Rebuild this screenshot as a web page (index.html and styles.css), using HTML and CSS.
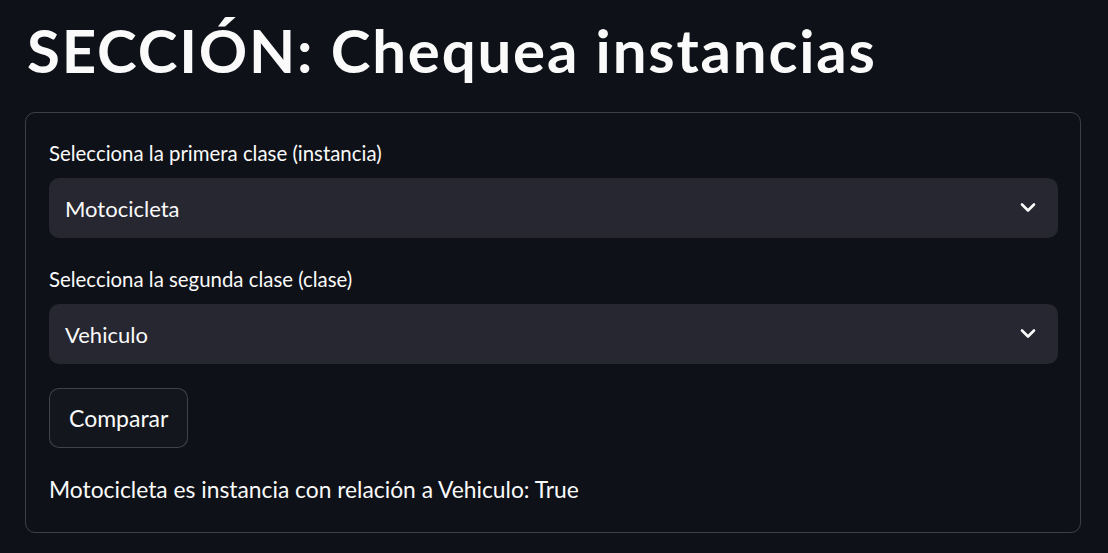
FILE: index.html
```html
<!DOCTYPE html>
<html lang="es">
<head>
<meta charset="utf-8">
<title>SECCIÓN: Chequea instancias</title>
<link rel="stylesheet" href="styles.css">
</head>
<body>
<main class="page">
  <h1 class="title">SECCIÓN: Chequea instancias</h1>
  <section class="form">
    <div class="field">
      <label class="label">Selecciona la primera clase (instancia)</label>
      <div class="select">
        <span class="value">Motocicleta</span>
        <svg class="chev" width="16" height="16" viewBox="0 0 16 16"><path d="M2 4.5 L8 10.5 L14 4.5" fill="none" stroke="#fafafa" stroke-width="2.6" stroke-linecap="round" stroke-linejoin="round"/></svg>
      </div>
    </div>
    <div class="field">
      <label class="label">Selecciona la segunda clase (clase)</label>
      <div class="select">
        <span class="value">Vehiculo</span>
        <svg class="chev" width="16" height="16" viewBox="0 0 16 16"><path d="M2 4.5 L8 10.5 L14 4.5" fill="none" stroke="#fafafa" stroke-width="2.6" stroke-linecap="round" stroke-linejoin="round"/></svg>
      </div>
    </div>
    <button class="btn">Comparar</button>
    <p class="result">Motocicleta es instancia con relación a Vehiculo: True</p>
  </section>
</main>
</body>
</html>
```
FILE: styles.css
```css
html, body {
  margin: 0;
  padding: 0;
  background: #0e1117;
  color: #fafafa;
  font-family: Lato, "Noto Sans", sans-serif;
}
.page {
  padding: 12px 27px 20px 25px;
  width: 1056px;
}
.title {
  margin: 0 0 0 2px;
  font-size: 60px;
  font-weight: 700;
  line-height: 76px;
  letter-spacing: 1.8px;
}
.form {
  margin-top: 24px;
  border: 1px solid rgba(250,250,250,0.2);
  border-radius: 10px;
  padding: 26px 22px 28px 23px;
  display: flex;
  flex-direction: column;
  align-items: flex-start;
}
.field {
  width: 100%;
  display: flex;
  flex-direction: column;
  margin-bottom: 27px;
}
.field:last-of-type {
  margin-bottom: 24px;
}
.label {
  font-size: 20.4px;
  line-height: 28px;
  margin-bottom: 11px;
}
.select {
  height: 60px;
  background: #262730;
  border-radius: 10px;
  display: flex;
  align-items: center;
  justify-content: space-between;
  padding: 0 22px 0 16px;
}
.value {
  font-size: 22px;
}
.btn {
  height: 60px;
  padding: 0 19px;
  background: #13161d;
  color: #fafafa;
  border: 1px solid rgba(250,250,250,0.2);
  border-radius: 10px;
  font-family: inherit;
  font-size: 23px;
}
.result {
  margin: 26px 0 0 0;
  font-size: 22.8px;
  line-height: 30px;
}
```
